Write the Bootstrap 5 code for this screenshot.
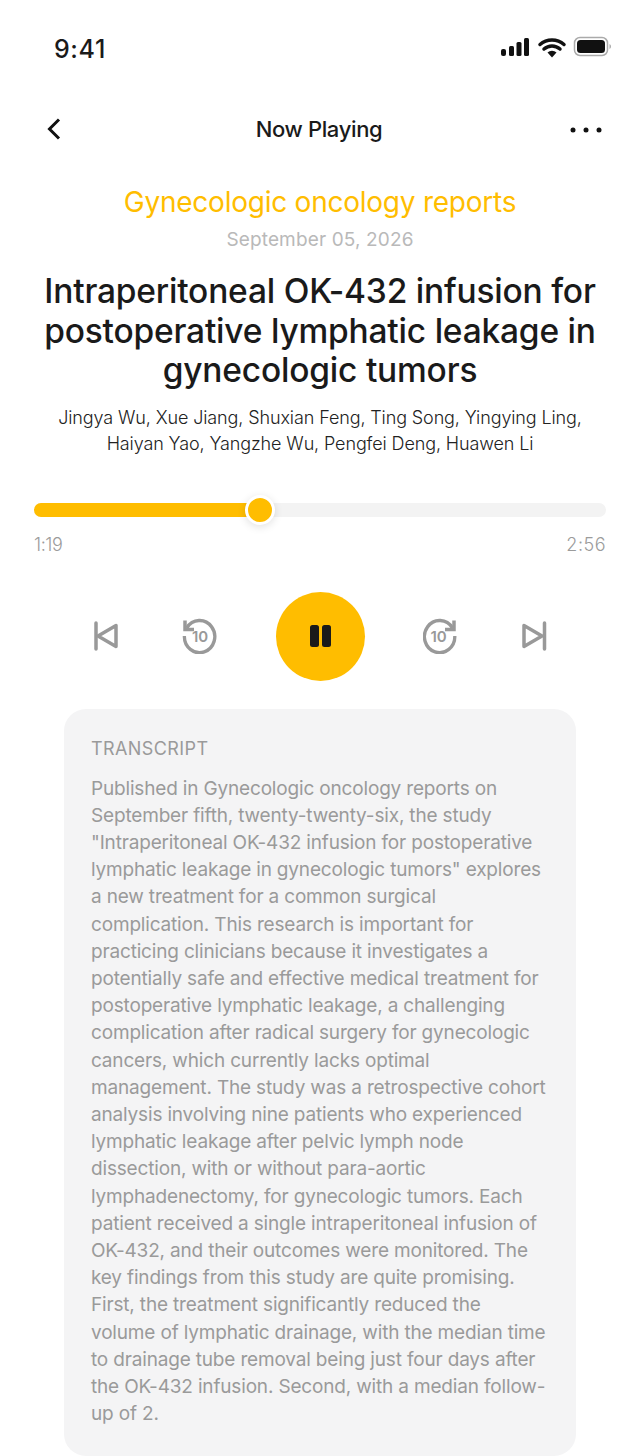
<!DOCTYPE html>
<html lang="en">
<head>
  <meta charset="UTF-8" />
  <title>Now Playing</title>
  <link href="https://cdn.jsdelivr.net/npm/bootstrap@5.3.3/dist/css/bootstrap.min.css" rel="stylesheet" />
  <style>
    body { font-family: Inter, "Liberation Sans", sans-serif; color: #1a1a1a; background: #fff; height: 1456px; overflow: hidden; }
    .status-row { height: 98px; padding: 35px 28px 0 54px; }
    .status-time { font-size: 25px; font-weight: 500; line-height: 28px; letter-spacing: .6px; }
    .top-row { height: 62px; padding: 0 38px 0 46px; }
    .top-title { font-size: 22px; font-weight: 500; letter-spacing: -.35px; }
    .journal { font-size: 28px; line-height: 34px; color: #ffbd00; letter-spacing: -.24px; margin-top: 25px; }
    .pub-date { font-size: 19px; line-height: 24px; color: #b9b9b9; margin-top: 9px; letter-spacing: .14px; }
    .paper-title { font-size: 33.5px; font-weight: 500; line-height: 39.5px; letter-spacing: -.2px; margin: 20px 0 0; }
    .authors { font-size: 18px; line-height: 26px; font-weight: 300; letter-spacing: -.12px; margin-top: 14px; color: #222; }
    .track-wrap { margin: 46px 34px 0; height: 14px; background: #f3f3f3; border-radius: 7px; position: relative; }
    .track-fill { height: 100%; background: #ffbd00; border-radius: 7px; }
    .track-knob { position: absolute; left: 211px; top: -8px; width: 30px; height: 30px; border-radius: 50%; background: #ffbd00; border: 3px solid #fff; box-shadow: 0 2px 8px rgba(0,0,0,.12); }
    .times { margin: 16px 34px 0; font-size: 18px; line-height: 24px; font-weight: 300; color: #9b9b9b; letter-spacing: -.4px; }
    .end-time { letter-spacing: .5px; }
    .controls { margin-top: 35px; padding: 0 90px; height: 89px; }
    .ctrl-svg { display: block; }
    .pause-btn { width: 89px; height: 89px; background: #ffbd00; border: 0; border-radius: 50%; padding: 0; }
    .transcript { margin: 28px 64px 0; background: #f4f4f5; border-radius: 22px; padding: 27px 27px 0; color: #9a9a9a; height: 747px; }
    .transcript-head { font-size: 18px; line-height: 26px; font-weight: 400; letter-spacing: .4px; margin-bottom: 13px; }
    .transcript-body { font-size: 19px; line-height: 27.2px; letter-spacing: -.17px; margin: 0; white-space: nowrap; }
  </style>
</head>
<body>
  <div class="status-row d-flex justify-content-between align-items-start">
    <span class="status-time">9:41</span>
    <svg width="112" height="24" viewBox="0 0 112 24" class="ctrl-svg">
      <rect x="1" y="14" width="5" height="7" rx="2" fill="#111"/>
      <rect x="9" y="11" width="5" height="10" rx="1.5" fill="#111"/>
      <rect x="16.500" y="7" width="5" height="14" rx="1.500" fill="#111"/>
      <rect x="24" y="3" width="5" height="18" rx="1.500" fill="#111"/>
      <path d="M40 9.500a18 18 0 0 1 24 0M44 14a12 12 0 0 1 16 0" fill="none" stroke="#111" stroke-width="3.500" stroke-linecap="round"/>
      <path d="M47.500 17.500a6.500 6.500 0 0 1 9 0L52 22.500z" fill="#111"/>
      <rect x="74.500" y="2.500" width="33" height="18" rx="5.500" fill="none" stroke="#aaa" stroke-width="1.500"/>
      <rect x="77" y="5" width="28" height="13" rx="3.500" fill="#111"/>
      <path d="M109.500 9v5a2.500 2.500 0 0 0 1.500-2.500a2.500 2.500 0 0 0-1.500-2.500z" fill="#aaa"/>
    </svg>
  </div>

  <div class="top-row d-flex justify-content-between align-items-center">
    <svg width="22" height="24" viewBox="0 0 22 24"><path d="M13 2.500 3.500 12 13 21.500" fill="none" stroke="#111" stroke-width="3"/></svg>
    <span class="top-title">Now Playing</span>
    <svg width="32" height="8" viewBox="0 0 32 8"><circle cx="3" cy="5" r="2.500" fill="#111"/><circle cx="16" cy="5" r="2.500" fill="#111"/><circle cx="29" cy="5" r="2.500" fill="#111"/></svg>
  </div>

  <div class="text-center">
    <div class="journal">Gynecologic oncology reports</div>
    <div class="pub-date">September 05, 2026</div>
    <h1 class="paper-title">Intraperitoneal OK-432 infusion for<br>postoperative lymphatic leakage in<br>gynecologic tumors</h1>
    <div class="authors">Jingya Wu, Xue Jiang, Shuxian Feng, Ting Song, Yingying Ling,<br>Haiyan Yao, Yangzhe Wu, Pengfei Deng, Huawen Li</div>
  </div>

  <div class="track-wrap">
    <div class="track-fill" style="width: 39%"></div>
    <div class="track-knob"></div>
  </div>
  <div class="times d-flex justify-content-between"><span>1:19</span><span class="end-time">2:56</span></div>

  <div class="controls d-flex justify-content-between align-items-center">
    <svg width="32" height="32" viewBox="0 0 32 32"><path d="M6 3v26" stroke="#999" stroke-width="3.500" stroke-linecap="round"/><path d="M26 5.500v21L8 16z" fill="none" stroke="#999" stroke-width="3.500" stroke-linejoin="round"/></svg>
    <svg width="36" height="36" viewBox="0 0 36 36">
      <path d="M4.500 10A16 16 0 1 1 2 18" fill="none" stroke="#999" stroke-width="3.500" transform="translate(1.500 0) scale(.95 1)"/>
      <path d="M4 2.500v9h9" fill="none" stroke="#999" stroke-width="3.500"/>
      <text x="19" y="24" text-anchor="middle" font-family="Inter, sans-serif" font-size="15" font-weight="600" fill="#999">10</text>
    </svg>
    <button class="pause-btn d-flex align-items-center justify-content-center gap-1" type="button" aria-label="Pause">
      <svg width="21" height="22" viewBox="0 0 21 22"><rect x="0" y="0" width="9" height="22" rx="2.500" fill="#1a1a1a"/><rect x="12" y="0" width="9" height="22" rx="2.500" fill="#1a1a1a"/></svg>
    </button>
    <svg width="36" height="36" viewBox="0 0 36 36">
      <path d="M31.500 10A16 16 0 1 0 34 18" fill="none" stroke="#999" stroke-width="3.500" transform="translate(-.5 0) scale(.95 1)"/>
      <path d="M31 2.500v9h-9" fill="none" stroke="#999" stroke-width="3.500"/>
      <text x="15.500" y="24" text-anchor="middle" font-family="Inter, sans-serif" font-size="15" font-weight="600" fill="#999">10</text>
    </svg>
    <svg width="32" height="32" viewBox="0 0 32 32"><path d="M26.500 3v26" stroke="#999" stroke-width="3.500" stroke-linecap="round"/><path d="M6 5.500v21L24 16z" fill="none" stroke="#999" stroke-width="3.500" stroke-linejoin="round"/></svg>
  </div>

  <div class="transcript">
    <div class="transcript-head">TRANSCRIPT</div>
    <p class="transcript-body">Published in Gynecologic oncology reports on<br>September fifth, twenty-twenty-six, the study<br>"Intraperitoneal OK-432 infusion for postoperative<br>lymphatic leakage in gynecologic tumors" explores<br>a new treatment for a common surgical<br>complication. This research is important for<br>practicing clinicians because it investigates a<br>potentially safe and effective medical treatment for<br>postoperative lymphatic leakage, a challenging<br>complication after radical surgery for gynecologic<br>cancers, which currently lacks optimal<br>management. The study was a retrospective cohort<br>analysis involving nine patients who experienced<br>lymphatic leakage after pelvic lymph node<br>dissection, with or without para-aortic<br>lymphadenectomy, for gynecologic tumors. Each<br>patient received a single intraperitoneal infusion of<br>OK-432, and their outcomes were monitored. The<br>key findings from this study are quite promising.<br>First, the treatment significantly reduced the<br>volume of lymphatic drainage, with the median time<br>to drainage tube removal being just four days after<br>the OK-432 infusion. Second, with a median follow-<br>up of 2.</p>
  </div>
  <script src="https://cdn.jsdelivr.net/npm/bootstrap@5.3.3/dist/js/bootstrap.bundle.min.js"></script>
</body>
</html>
